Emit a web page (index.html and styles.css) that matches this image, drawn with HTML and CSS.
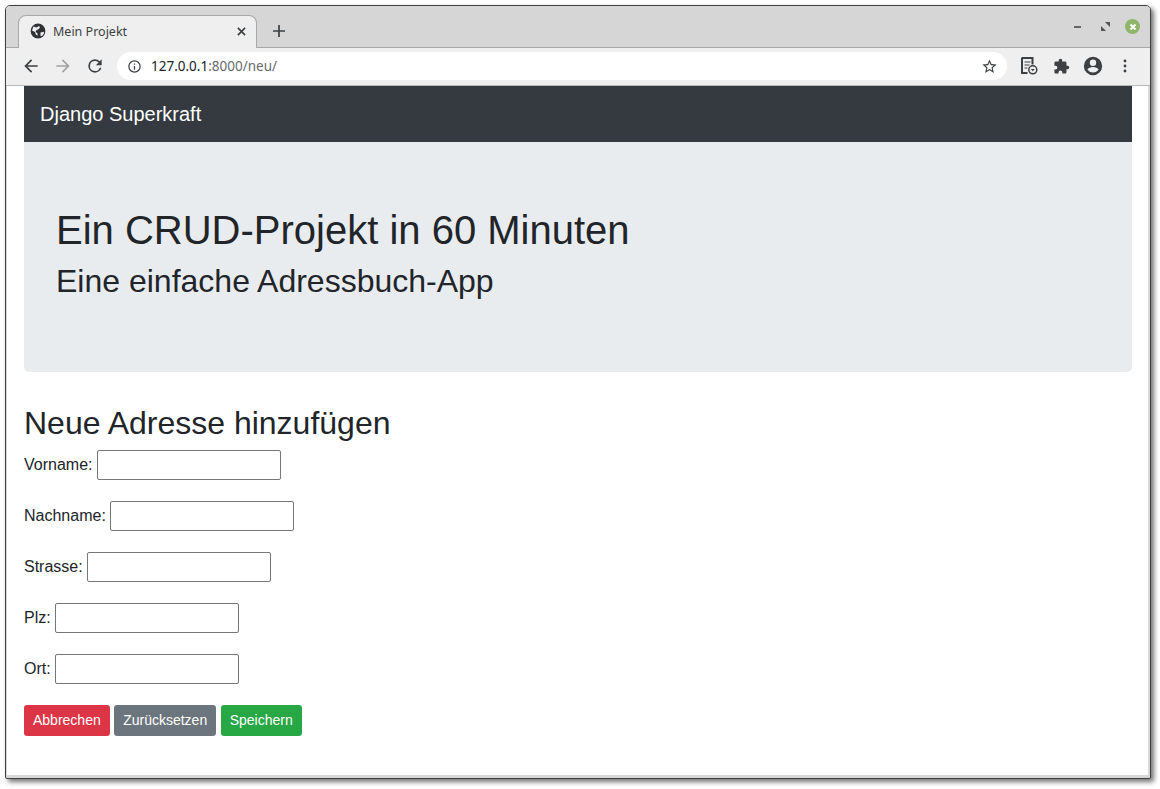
FILE: index.html
```html
<!DOCTYPE html>
<html lang="de">
<head>
<meta charset="utf-8">
<title>Mein Projekt</title>
<link rel="stylesheet" href="styles.css">
</head>
<body>
<div class="window">
  <div class="tabstrip">
    <div class="tab">
      <svg class="favicon" viewBox="0 0 16 16"><circle cx="8" cy="8" r="7.400" fill="#2f3235"/><path d="M3.500 3.500l3 1L9 3l1 1.200-1.500 2L6.500 7 5.500 9l2 1.200v2.600L5.800 11.500 5 9 2 7.500zM10.500 9.500l3-.8.700 1.300-1.700 2.500-2 .8z" fill="#efefef"/></svg>
      <span class="tab-title">Mein Projekt</span>
      <svg class="tab-close" viewBox="0 0 10 10"><path d="M1 1l8 8M9 1l-8 8" stroke="#3c4043" stroke-width="1.800"/></svg>
    </div>
    <svg class="new-tab" viewBox="0 0 12 12"><path d="M6 0v12M0 6h12" stroke="#3c4043" stroke-width="1.700"/></svg>
    <div class="winctl">
      <span class="ctl-min"></span>
      <svg class="ctl-max" viewBox="0 0 8 8"><path d="M3.500 0H8v4.500zM4.500 8H0V3.500z" fill="#555"/></svg>
      <span class="ctl-close"><svg viewBox="0 0 8 8"><path d="M1.500 1.500l5 5M6.500 1.500l-5 5" stroke="#fff" stroke-width="1.800"/></svg></span>
    </div>
  </div>
  <div class="toolbar">
    <svg class="tool" viewBox="0 0 24 24"><path d="M20 11H7.800l5.600-5.600L12 4l-8 8 8 8 1.400-1.400L7.800 13H20z" fill="#3c4043"/></svg>
    <svg class="tool" viewBox="0 0 24 24"><path d="M4 11h12.200l-5.600-5.600L12 4l8 8-8 8-1.400-1.400 5.600-5.600H4z" fill="#a0a2a4"/></svg>
    <svg class="tool" viewBox="0 0 24 24"><path d="M17.650 6.350A7.960 7.960 0 0 0 12 4a8 8 0 1 0 7.740 10h-2.080A6 6 0 1 1 12 6c1.660 0 3.140.69 4.220 1.780L13 11h7V4z" fill="#3c4043"/></svg>
    <div class="omnibox">
      <svg class="info" viewBox="0 0 24 24"><path d="M11 7h2v2h-2zm0 4h2v6h-2zm1-9a10 10 0 1 0 0 20 10 10 0 0 0 0-20zm0 18a8 8 0 1 1 0-16 8 8 0 0 1 0 16z" fill="#3c4043"/></svg>
      <span class="url"><span class="host">127.0.0.1</span>:8000/neu/</span>
      <svg class="star" viewBox="0 0 24 24"><path d="M22 9.240l-7.190-.62L12 2 9.190 8.630 2 9.240l5.460 4.730L5.820 21 12 17.270 18.180 21l-1.630-7.030zM12 15.400l-3.760 2.270 1-4.280-3.320-2.880 4.380-.38L12 6.100l1.710 4.040 4.380.38-3.320 2.880 1 4.280z" fill="#3c4043"/></svg>
    </div>
    <svg class="ext" viewBox="0 0 18 18"><path d="M1.500 1h11v6.500M2 1v15h5.500" fill="none" stroke="#3c4043" stroke-width="2"/><path d="M4.500 4.500h6v1h-6zM4.500 7.500h5v1h-5zM4.500 10.500h3v1h-3z" fill="#3c4043"/><circle cx="12.800" cy="12.800" r="4" fill="#efefef" stroke="#3c4043" stroke-width="1.500"/><path d="M10.800 12h4l-2 2.300z" fill="#3c4043"/></svg>
    <svg class="puzzle" viewBox="0 0 24 24"><path d="M20.500 11H19V7a2 2 0 0 0-2-2h-4V3.500a2.500 2.500 0 0 0-5 0V5H4a2 2 0 0 0-2 2v3.800h1.500a2.700 2.700 0 0 1 0 5.400H2V20a2 2 0 0 0 2 2h3.800v-1.500a2.700 2.700 0 0 1 5.400 0V22H17a2 2 0 0 0 2-2v-4h1.500a2.500 2.500 0 0 0 0-5z" fill="#3c4043"/></svg>
    <svg class="avatar" viewBox="0 0 24 24"><path d="M12 2a10 10 0 1 0 0 20 10 10 0 0 0 0-20zm0 3a3.500 3.500 0 1 1 0 7 3.500 3.500 0 0 1 0-7zm0 14.200a7.500 7.500 0 0 1-6-3.100c.03-2 4-3.100 6-3.100s5.970 1.100 6 3.100a7.500 7.500 0 0 1-6 3.100z" fill="#3c4043"/></svg>
    <svg class="menu" viewBox="0 0 4 14"><circle cx="2" cy="2" r="1.400" fill="#3c4043"/><circle cx="2" cy="7" r="1.400" fill="#3c4043"/><circle cx="2" cy="12" r="1.400" fill="#3c4043"/></svg>
  </div>
  <div class="page">
    <nav class="navbar"><a class="brand">Django Superkraft</a></nav>
    <header class="jumbotron">
      <h1>Ein CRUD-Projekt in 60 Minuten</h1>
      <p class="lead">Eine einfache Adressbuch-App</p>
    </header>
    <h2 class="form-title">Neue Adresse hinzufügen</h2>
    <form class="address">
      <p class="row"><label>Vorname:</label> <input type="text"></p>
      <p class="row"><label>Nachname:</label> <input type="text"></p>
      <p class="row"><label>Strasse:</label> <input type="text"></p>
      <p class="row"><label>Plz:</label> <input type="text"></p>
      <p class="row"><label>Ort:</label> <input type="text"></p>
      <div class="actions">
        <button type="button" class="btn red">Abbrechen</button>
        <button type="reset" class="btn grey">Zurücksetzen</button>
        <button type="button" class="btn green">Speichern</button>
      </div>
    </form>
  </div>
</div>
</body>
</html>
```
FILE: styles.css
```css
html, body { margin: 0; height: 100%; background: #fff; overflow: hidden; }
body { padding: 5px 0 0 5px; box-sizing: border-box; }

.window {
  width: 1146px;
  height: 774px;
  box-sizing: border-box;
  border: 1px solid #3f3f3f;
  border-radius: 5px 5px 2px 2px;
  background: #fff;
  box-shadow: 3px 3px 5px rgba(0, 0, 0, .55), inset -2px -3px 0 #d8d8d8, inset 1px 0 0 #d8d8d8;
  padding: 0 2px 3px 1px;
  display: flex;
  flex-direction: column;
  font-family: "Liberation Sans", Arial, sans-serif;
  color: #212529;
}

.tabstrip {
  height: 42px;
  margin: 0 -2px 0 -1px;
  padding-left: 12px;
  background: #d6d6d6;
  border-radius: 4px 4px 0 0;
  display: flex;
  align-items: flex-end;
  box-sizing: border-box;
  border-bottom: 1px solid #a8a8a8;
}
.tab {
  width: 239px;
  height: 33px;
  margin-bottom: -1px;
  box-sizing: border-box;
  background: #efefef;
  border: 1px solid #a8a8a8;
  border-bottom: 0;
  border-radius: 8px 8px 0 0;
  display: flex;
  align-items: center;
  padding: 0 10px 2px 11px;
  font-family: "Noto Sans", sans-serif;
  font-size: 12.500px;
  color: #3c4043;
}
.favicon { width: 16px; height: 16px; margin-right: 7px; }
.tab-title { flex: 1; }
.tab-close { width: 9px; height: 9px; }
.new-tab { width: 12px; height: 12px; margin: 0 0 10px 16px; }
.winctl { margin-left: auto; display: flex; align-items: center; padding: 0 10px 13px 0; }
.ctl-min { width: 7px; height: 2px; background: #666; margin-right: 20px; }
.ctl-max { width: 9px; height: 9px; margin-right: 15px; }
.ctl-close { width: 15px; height: 15px; border-radius: 50%; background: #8fb56a; display: flex; align-items: center; justify-content: center; }
.ctl-close svg { width: 8px; height: 8px; }

.toolbar {
  height: 38px;
  margin: 0 -2px 0 -1px;
  box-sizing: border-box;
  background: #efefef;
  border-bottom: 1px solid #b9b9b9;
  display: flex;
  align-items: center;
  padding: 0 14px 1px 15px;
}
.tool { width: 20px; height: 20px; margin-right: 12px; }
.omnibox {
  width: 890px;
  height: 28px;
  box-sizing: border-box;
  background: #fff;
  border-radius: 14px;
  display: flex;
  align-items: center;
  padding: 0 9px 0 10px;
}
.info { width: 15px; height: 15px; margin-right: 9px; }
.url { flex: 1; font-family: "Noto Sans", sans-serif; font-size: 13.500px; color: #666a6e; }
.host { color: #202124; }
.star { width: 17px; height: 17px; }
.ext { width: 18px; height: 18px; margin-left: 13px; }
.puzzle { width: 17px; height: 17px; margin-left: 15px; }
.avatar { width: 22px; height: 22px; margin-left: 12px; }
.menu { width: 4px; height: 14px; margin-left: 19px; }

.page { flex: 1; padding: 0 16px 0 17px; font-size: 16px; line-height: 1.500; }

.navbar { height: 56px; background: #343a40; display: flex; align-items: center; padding: 0 16px; }
.brand { color: #fff; font-size: 20px; }

.jumbotron {
  height: 230px;
  box-sizing: border-box;
  background: #e9ecef;
  border-radius: 0 0 5px 5px;
  padding: 64px 32px;
  margin-bottom: 32px;
}
.jumbotron h1 { margin: 0; font-size: 40px; font-weight: 400; line-height: 1.200; }
.lead { margin: 8px 0 0; font-size: 32px; line-height: 1.200; font-weight: 400; }

.form-title { margin: 0 0 8px; font-size: 32px; font-weight: 400; line-height: 1.200; }
.row { margin: 0 0 21px; height: 30px; display: block; }
.row label { vertical-align: -1px; }
.row input {
  width: 184px;
  height: 30px;
  box-sizing: border-box;
  padding: 1px 2px;
  border: 1px solid #767676;
  border-radius: 2px;
  background: #fff;
  vertical-align: middle;
}
.actions { display: flex; gap: 4.450px; }
.btn {
  height: 31px;
  box-sizing: border-box;
  border: 1px solid transparent;
  border-radius: 3.200px;
  padding: 4px 8px;
  font: 14px/1.500 "Liberation Sans", Arial, sans-serif;
  color: #fff;
}
.red { background: #dc3545; }
.grey { background: #6c757d; }
.green { background: #28a745; }
```
